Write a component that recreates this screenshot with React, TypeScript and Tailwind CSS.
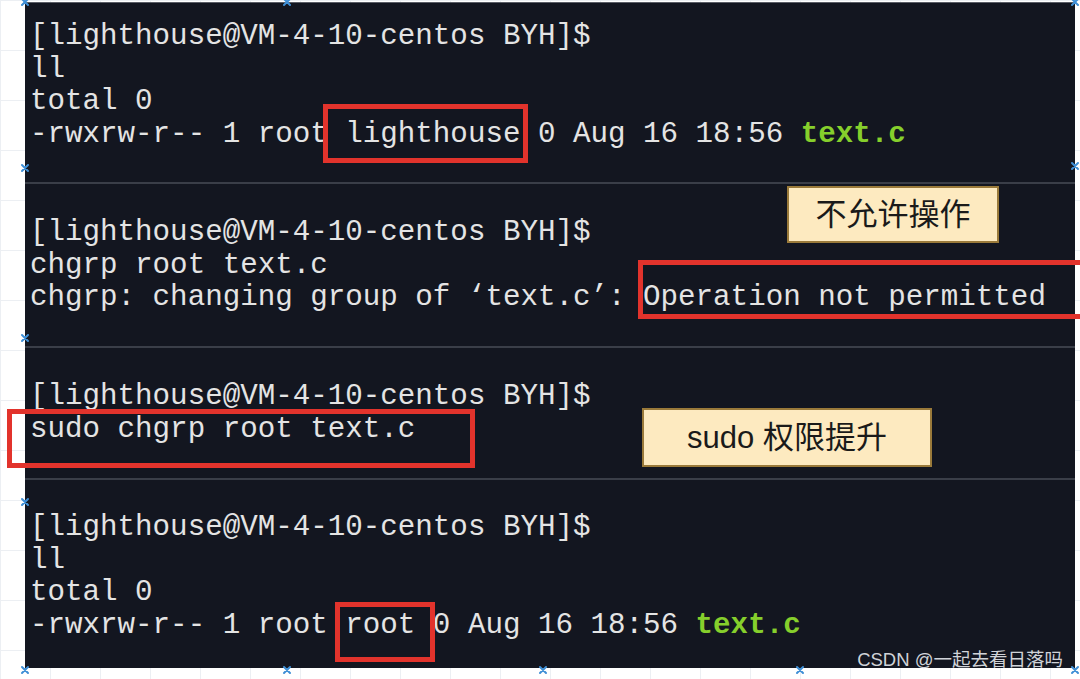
import React from "react";

type Piece = { text: string; green?: boolean };
type Line = Piece[];

const prompt: Line = [{ text: "[lighthouse@VM-4-10-centos BYH]$" }];

const sections: { lines: Line[]; height: string; pad: string }[] = [
  {
    height: "h-[179px]",
    pad: "pt-[18px]",
    lines: [
      prompt,
      [{ text: "ll" }],
      [{ text: "total 0" }],
      [
        { text: "-rwxrw-r-- 1 root lighthouse 0 Aug 16 18:56 " },
        { text: "text.c", green: true },
      ],
    ],
  },
  {
    height: "h-[162px]",
    pad: "pt-[33px]",
    lines: [
      prompt,
      [{ text: "chgrp root text.c" }],
      [{ text: "chgrp: changing group of \u2018text.c\u2019: Operation not permitted" }],
    ],
  },
  {
    height: "h-[130px]",
    pad: "pt-[33px]",
    lines: [prompt, [{ text: "sudo chgrp root text.c" }]],
  },
  {
    height: "h-[189px]",
    pad: "pt-[32px]",
    lines: [
      prompt,
      [{ text: "ll" }],
      [{ text: "total 0" }],
      [
        { text: "-rwxrw-r-- 1 root root 0 Aug 16 18:56 " },
        { text: "text.c", green: true },
      ],
    ],
  },
];

// little blue selection handles from the editor canvas
const marks = [
  [25, 2],
  [287, 2],
  [1075, 2],
  [25, 168],
  [1075, 166],
  [25, 338],
  [25, 502],
  [25, 670],
  [287, 670],
  [543, 670],
  [800, 670],
  [1075, 670],
];

const Mark = ({ x, y }: { x: number; y: number }) => (
  <svg
    className="absolute"
    style={{ left: x - 5, top: y - 5 }}
    width="10"
    height="10"
    viewBox="0 0 10 10"
  >
    <path d="M2 2 L8 8 M8 2 L2 8" stroke="#3f8fd6" strokeWidth="2" strokeLinecap="round" />
  </svg>
);

export default function App() {
  return (
    <div className="relative w-[1080px] h-[679px] overflow-hidden bg-white bg-[linear-gradient(#eceff3_1px,transparent_1px),linear-gradient(90deg,#eceff3_1px,transparent_1px)] bg-[size:50px_50px] pt-[2px] pl-[25px]">
      <div className="relative w-[1050px] h-[666px] bg-[#131620] border-t border-[#5a5d66] flex flex-col font-['Liberation_Mono',monospace] text-[29.2px] leading-[32.7px] text-[#e4e4e4]">
        {sections.map((s, i) => (
          <React.Fragment key={i}>
            {i > 0 && <div className="h-[2px] bg-[#3a3e48] shrink-0" />}
            <div className={`${s.height} ${s.pad} pl-[5px] shrink-0 whitespace-pre`}>
              {s.lines.map((line, j) => (
                <div key={j}>
                  {line.map((p, k) =>
                    p.green ? (
                      <span key={k} className="text-[#86cf2c] font-bold">
                        {p.text}
                      </span>
                    ) : (
                      <span key={k}>{p.text}</span>
                    ),
                  )}
                </div>
              ))}
            </div>
          </React.Fragment>
        ))}

        {/* red highlight boxes */}
        <div className="absolute left-[298px] top-[101px] w-[205px] h-[59px] border-[5px] border-[#e2332c]" />
        <div className="absolute left-[613px] top-[257px] w-[470px] h-[59px] border-[5px] border-[#e2332c]" />
        <div className="absolute left-[-18px] top-[406px] w-[468px] h-[59px] border-[5px] border-[#e2332c]" />
        <div className="absolute left-[310px] top-[599px] w-[100px] h-[60px] border-[5px] border-[#e2332c]" />

        {/* labels */}
        <div className="absolute left-[762px] top-[183px] w-[212px] h-[57px] bg-[#fdeac0] border-2 border-[#9a7a3a] flex items-center justify-center font-['Liberation_Sans','Noto_Sans_CJK_SC',sans-serif] text-[31px] leading-none text-[#1a1a1a]">
          不允许操作
        </div>
        <div className="absolute left-[617px] top-[405px] w-[290px] h-[59px] bg-[#fdeac0] border-2 border-[#9a7a3a] flex items-center justify-center font-['Liberation_Sans','Noto_Sans_CJK_SC',sans-serif] text-[31px] leading-none text-[#1a1a1a]">
          sudo 权限提升
        </div>
      </div>

      {marks.map(([x, y], i) => (
        <Mark key={i} x={x} y={y} />
      ))}

      <div className="absolute right-[17px] bottom-[10px] font-['Liberation_Sans','Noto_Sans_CJK_SC',sans-serif] text-[18.5px] leading-none text-[#d0d3d8]">
        CSDN @一起去看日落吗
      </div>
    </div>
  );
}
